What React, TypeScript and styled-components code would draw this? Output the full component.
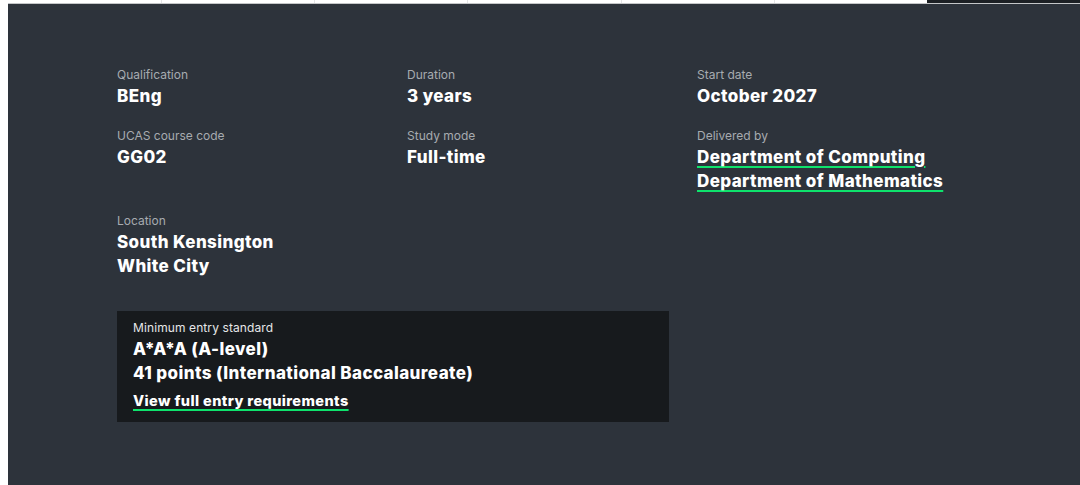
import React from "react";
import styled, { createGlobalStyle } from "styled-components";

const GlobalStyle = createGlobalStyle`
  html, body {
    margin: 0;
    padding: 0;
    background: #ffffff;
    font-family: Inter, "Liberation Sans", sans-serif;
  }
`;

const Page = styled.div`
  padding-left: 8px;
`;

const TabBar = styled.nav`
  display: grid;
  grid-template-columns: repeat(7, 1fr);
  height: 3px;
  border-bottom: 1px solid #c4c6c8;
`;

const Tab = styled.div<{ active?: boolean }>`
  background: ${(p) => (p.active ? "#1c2024" : "#ffffff")};
  border-left: 1px solid ${(p) => (p.active ? "#1c2024" : "#e4e5e6")};
  &:first-child {
    border-left: 0;
  }
`;

const Panel = styled.section`
  background: #2d333b;
  padding: 62px 0 64px 109px;
  min-height: 420px;
  box-sizing: border-box;
`;

const Grid = styled.dl`
  display: grid;
  grid-template-columns: repeat(3, 262px);
  column-gap: 28px;
  row-gap: 19px;
  margin: 0;
`;

const Item = styled.div`
  display: flex;
  flex-direction: column;
`;

const Label = styled.dt`
  font-size: 12px;
  line-height: 18px;
  color: #a7abb0;
`;

const Value = styled.dd`
  margin: 0;
  font-size: 17px;
  line-height: 24px;
  font-weight: 800;
  letter-spacing: 0.4px;
  color: #ffffff;
`;

const Link = styled.a<{ size?: number }>`
  color: #ffffff;
  font-weight: 800;
  font-size: ${(p) => p.size ?? 17}px;
  letter-spacing: 0.4px;
  text-decoration: underline;
  text-decoration-color: #0ee36c;
  text-decoration-thickness: 2px;
  text-underline-offset: 3px;
  text-decoration-skip-ink: auto;
`;

const EntryBox = styled.div`
  grid-column: span 2;
  margin-top: 14px;
  background: #171a1d;
  padding: 8px 16px 10px;
`;

const EntryLabel = styled.div`
  font-size: 12px;
  line-height: 18px;
  letter-spacing: 0.1px;
  color: #e6e7e8;
`;

const EntryValue = styled.div`
  font-size: 17px;
  line-height: 24px;
  font-weight: 800;
  letter-spacing: 0.4px;
  color: #ffffff;
`;

const EntryLinkRow = styled.div`
  margin-top: 4px;
  line-height: 22px;
`;

const tabs = [false, false, false, false, false, false, true];

export default function App() {
  return (
    <>
      <GlobalStyle />
      <Page>
        <TabBar>
          {tabs.map((active, i) => (
            <Tab key={i} active={active} />
          ))}
        </TabBar>
        <Panel>
          <Grid>
            <Item>
              <Label>Qualification</Label>
              <Value>BEng</Value>
            </Item>
            <Item>
              <Label>Duration</Label>
              <Value>3 years</Value>
            </Item>
            <Item>
              <Label>Start date</Label>
              <Value>October 2027</Value>
            </Item>
            <Item>
              <Label>UCAS course code</Label>
              <Value>GG02</Value>
            </Item>
            <Item>
              <Label>Study mode</Label>
              <Value>Full-time</Value>
            </Item>
            <Item>
              <Label>Delivered by</Label>
              <Value>
                <Link href="#">Department of Computing</Link>
              </Value>
              <Value>
                <Link href="#">Department of Mathematics</Link>
              </Value>
            </Item>
            <Item>
              <Label>Location</Label>
              <Value>South Kensington</Value>
              <Value>White City</Value>
            </Item>
            <div />
            <div />
            <EntryBox>
              <EntryLabel>Minimum entry standard</EntryLabel>
              <EntryValue>A*A*A (A-level)</EntryValue>
              <EntryValue>41 points (International Baccalaureate)</EntryValue>
              <EntryLinkRow>
                <Link href="#" size={14.5}>
                  View full entry requirements
                </Link>
              </EntryLinkRow>
            </EntryBox>
          </Grid>
        </Panel>
      </Page>
    </>
  );
}
